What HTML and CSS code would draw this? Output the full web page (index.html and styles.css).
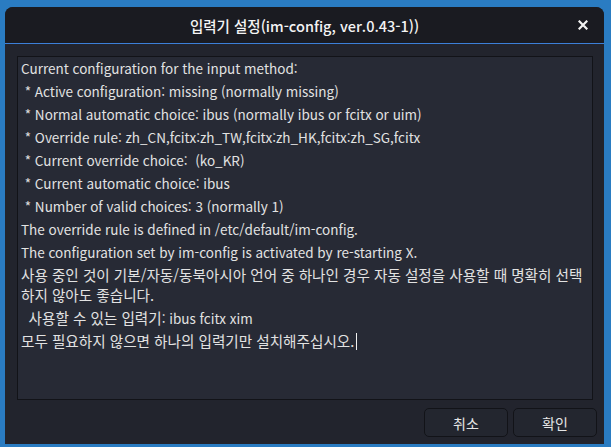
FILE: index.html
```html
<!DOCTYPE html>
<html lang="ko">
<head>
    <meta charset="UTF-8">
    <title>입력기 설정(im-config, ver.0.43-1))</title>
    <link rel="stylesheet" href="styles.css">
</head>
<body>
    <div class="window">
        <div class="titlebar">
            <span class="title">입력기 설정(im-config, ver.0.43-1))</span>
            <svg class="close" width="10" height="10" viewBox="0 0 10 10">
                <path d="M1.5 1.5 L8.5 8.5 M8.5 1.5 L1.5 8.5" stroke="#f2f2f2" stroke-width="2.2" stroke-linecap="square"/>
            </svg>
        </div>

        <div class="content">
            <div class="textview">
                <p>Current configuration for the input method:</p>
                <p> * Active configuration: missing (normally missing)</p>
                <p> * Normal automatic choice: ibus (normally ibus or fcitx or uim)</p>
                <p> * Override rule: zh_CN,fcitx:zh_TW,fcitx:zh_HK,fcitx:zh_SG,fcitx</p>
                <p> * Current override choice:  (ko_KR)</p>
                <p> * Current automatic choice: ibus</p>
                <p> * Number of valid choices: 3 (normally 1)</p>
                <p>The override rule is defined in /etc/default/im-config.</p>
                <p>The configuration set by im-config is activated by re-starting X.</p>
                <p class="ko">사용 중인 것이 기본/자동/동북아시아 언어 중 하나인 경우 자동 설정을 사용할 때 명확히 선택 하지 않아도 좋습니다.</p>
                <p>  <span class="ko">사용할 수 있는 입력기</span>: ibus fcitx xim</p>
                <p class="ko">모두 필요하지 않으면 하나의 입력기만 설치해주십시오.<span class="cursor"></span></p>
            </div>

            <div class="actions">
                <button>취소</button>
                <button>확인</button>
            </div>
        </div>
    </div>
</body>
</html>
```

FILE: styles.css
```css
/* Desktop behind the dialog */
body {
    margin: 0;
    background-color: #2a7cc2;
    font-family: "Noto Sans CJK KR", "Noto Sans", sans-serif;
    height: 447px;
    overflow: hidden;
}

/* Dialog window */
.window {
    margin: 7px 0 0 5px;
    width: 599px;
    height: 437px;
    background-color: #22242d;
    border-radius: 8px 8px 0 0;
    display: flex;
    flex-direction: column;
    overflow: hidden;
}

/* Title bar */
.titlebar {
    height: 36px;
    flex-shrink: 0;
    background-color: #1a1b21;
    border-bottom: 1px solid #3c7fd8;
    display: flex;
    align-items: center;
    justify-content: center;
    position: relative;
}

.title {
    color: #f4f4f4;
    font-size: 14.5px;
    font-weight: 500;
}

.close {
    position: absolute;
    right: 16px;
    top: 13px;
}

/* Body of the dialog */
.content {
    flex: 1;
    display: flex;
    flex-direction: column;
    padding: 12px 11px 8px 12px;
    gap: 8px;
}

/* Text view */
.textview {
    height: 338px;
    background-color: #272a35;
    border: 1px solid #121318;
    padding: 1px 0 3px 3px;
    color: #e2e2e2;
    font-size: 13.5px;
}

.textview p {
    margin: 0 0 3px;
    line-height: 20px;
    white-space: pre-wrap;
}

/* Hangul is drawn a little wider than the latin text */
.textview .ko {
    font-size: 14.6px;
    word-break: keep-all;
}

.cursor {
    display: inline-block;
    width: 1px;
    height: 17px;
    margin-left: 2px;
    background-color: #f0f0f0;
    vertical-align: -3px;
}

/* Buttons */
.actions {
    display: flex;
    justify-content: flex-end;
    gap: 5px;
    margin-right: -4px;
}

button {
    width: 84px;
    height: 29px;
    border: 1px solid #121318;
    border-radius: 5px;
    background-color: #23262f;
    color: #e6e6e6;
    font-family: inherit;
    font-size: 14px;
}
```
